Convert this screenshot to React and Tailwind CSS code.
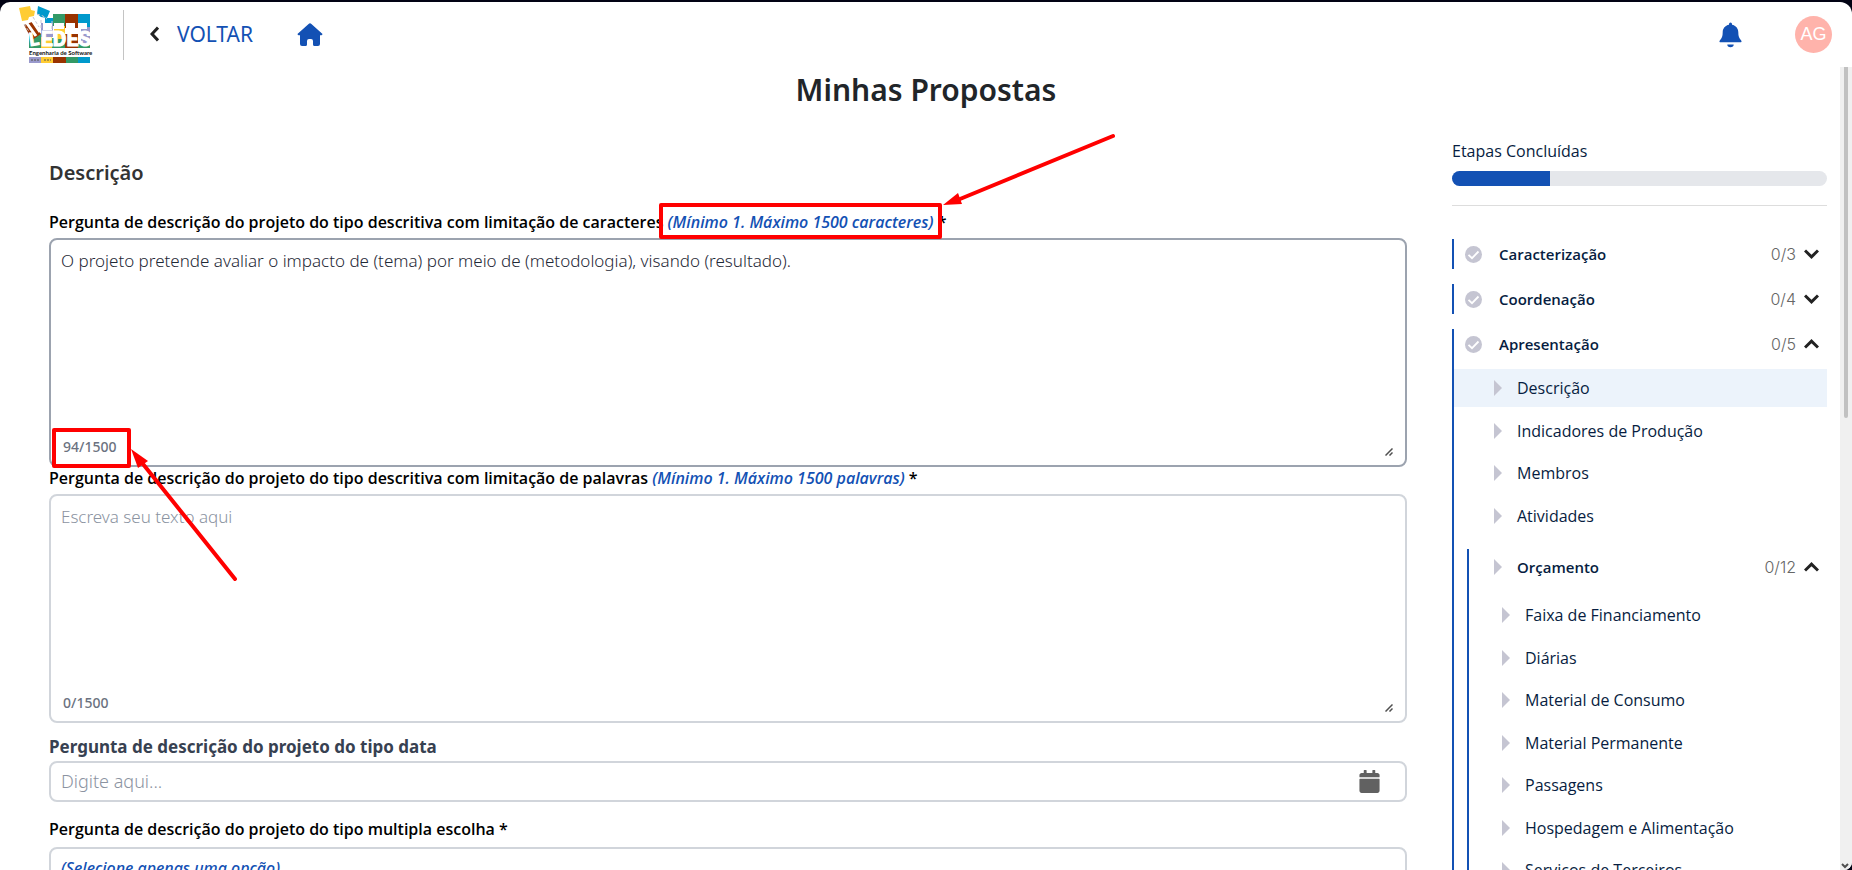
import { FaCalendar } from "react-icons/fa";

const sections = [
  { title: "Caracterização", count: "0/3" },
  { title: "Coordenação", count: "0/4" },
  { title: "Apresentação", count: "0/5", open: true },
];

const steps = ["Descrição", "Indicadores de Produção", "Membros", "Atividades"];

const budgetSteps = [
  "Faixa de Financiamento",
  "Diárias",
  "Material de Consumo",
  "Material Permanente",
  "Passagens",
  "Hospedagem e Alimentação",
  "Serviços de Terceiros",
];

function Logo() {
  return (
    <svg width="71" height="57" viewBox="0 0 71 57" className="overflow-visible" aria-label="LEDES">
      <path fill="#339966" d="M34 8h12v12H34zM10 28h12v14H10zM33 32h13v10H33zM58 38h13v4H58z" />
      <path fill="#993300" d="M46 8h16v14H46zM5 19l8 -3 9 12 -9 6zM46 28h13v14H46z" />
      <path fill="#0099cc" d="M59 8h12v13H59zM19 0l12 5 -3 7 -6 -1 -4 -3zM26 12h8v8H26z" />
      <path fill="#9999cc" d="M62 21h9v17h-9zM22 17h12v14H22z" />
      <path fill="#ffcc33" d="M0 2l11 -2 1 4 4 1 -1 5 -5 1 -1 3 -6 1zM22 31h11v11H22zM35 20h11v13H35z" />
      <path fill="#fff" d="M24 17h9v7h-9zM35 17h10v6H35zM47 17h9v6h-9zM59 17h9v6h-9z" />
      <path fill="none" stroke="#fff" strokeWidth="3" d="M7 16l10 14M13 14l8 12M18 10l4 6" />
      <path
        fill="none"
        stroke="#c5c5d2"
        strokeWidth="1"
        strokeDasharray="3 2"
        d="M5 18l8 12M14 11l6 10M18 8l6 2 4 3M22 14v8M33 15v8"
      />
      <g fill="#fff" stroke="#fff" strokeWidth="1" fontFamily="'Roboto', sans-serif" fontWeight="700">
        <text x="11" y="40" fontSize="18" transform="rotate(-8 11 40)">
          L
        </text>
        <text x="22" y="40" fontSize="21">
          EDES
        </text>
      </g>
      <path fill="#fff" d="M10 42h61v9H10z" />
      <text x="10" y="49" fontSize="6" fontWeight="700" fill="#111" fontFamily="'Lato', sans-serif">
        Engenharia de Software
      </text>
      <path fill="#9999cc" d="M10 51h12v6H10z" />
      <path fill="#ffcc33" d="M22 51h12v6H22z" />
      <path fill="#993300" d="M34 51h13v6H34z" />
      <path fill="#339966" d="M47 51h12v6H47z" />
      <path fill="#0099cc" d="M59 51h12v6H59z" />
      <path stroke="#554" strokeWidth="1" strokeDasharray="2 1" d="M12 54h8M25 54h7" />
    </svg>
  );
}

function HomeIcon() {
  return (
    <svg width="26" height="24" viewBox="0 0 26 24" fill="#1351b4">
      <path d="M11.6 1a2 2 0 0 1 2.8 0L25 10.400a1 1 0 0 1-.7 1.800H23V21a2 2 0 0 1-2 2h-3.500a1.500 1.500 0 0 1-1.500-1.500V18a2 2 0 0 0-2-2h-2a2 2 0 0 0-2 2v3.500A1.500 1.500 0 0 1 8.500 23H5a2 2 0 0 1-2-2v-8.800H1.700A1 1 0 0 1 1 10.400z" />
    </svg>
  );
}

function BellIcon() {
  return (
    <svg width="23" height="26" viewBox="0 0 23 26" fill="#1351b4">
      <path d="M11.500 0.500a1.500 1.500 0 0 1 1.500 1.500v.8c3.800.7 6.300 3.700 6.300 7.500 0 4.200.8 6 2.900 8.100.8.9.3 1.900-.9 1.900H1.700c-1.200 0-1.700-1-.9-1.900 2.100-2.100 2.900-3.900 2.900-8.100 0-3.800 2.500-6.800 6.300-7.500V2a1.500 1.500 0 0 1 1.500-1.500z" />
      <path d="M8.300 22.500h6.400a3.200 2.800 0 0 1-6.400 0z" />
    </svg>
  );
}

function Chevron({ open }) {
  return (
    <svg width="15" height="10" viewBox="0 0 15 10" fill="none" stroke="#222" strokeWidth="3">
      <path d={open ? "M1 8.500L7.500 2.200L14 8.500" : "M1 1.500L7.500 7.800L14 1.500"} />
    </svg>
  );
}

function CheckIcon() {
  return (
    <svg width="17" height="17" viewBox="0 0 17 17">
      <circle cx="8.500" cy="8.500" r="8.500" fill="#c5c5d2" />
      <path d="M3.500 8.800L7 12.200L13.500 5.500" fill="none" stroke="#fff" strokeWidth="1.800" />
    </svg>
  );
}

function Triangle() {
  return (
    <svg width="8" height="16" viewBox="0 0 8 16" fill="#c5c5d2">
      <path d="M0 0L8 8L0 16z" />
    </svg>
  );
}

function LongAnswer({ id, label, hint, counter, value, placeholder, active }) {
  return (
    <div>
      <label
        htmlFor={id}
        className="block h-[27px] font-['Open_Sans',sans-serif] text-[16px] leading-[22px] font-semibold text-black"
      >
        {label} <span className="text-[#1351b4] italic">{hint}</span> *
      </label>
      <div
        className={`relative h-[229px] rounded-lg border-2 px-[10px] pt-[9px] pb-[10px] ${
          active ? "border-[#9ca3af]" : "border-[#d1d5db]"
        }`}
      >
        <textarea
          id={id}
          defaultValue={value}
          placeholder={placeholder}
          className="block h-full w-full resize-none bg-transparent text-[17px] leading-[24px] font-light text-[#1f2937] outline-none placeholder:text-[#8b93a1]"
        />
        <span className="absolute bottom-2 left-3 text-[14px] leading-[20px] font-medium text-[#6b7280]">
          {counter}
        </span>
        <svg
          width="8"
          height="8"
          viewBox="0 0 8 8"
          stroke="#505050"
          strokeWidth="1.500"
          className="absolute right-3 bottom-[9px]"
        >
          <path d="M0.500 7.500L7.500 0.500M4.500 7.500L7.500 4.500" />
        </svg>
      </div>
    </div>
  );
}

function StepLink({ children, active }) {
  return (
    <a
      href="#"
      className={`flex h-[38px] items-center gap-[15px] pl-10 ${active ? "bg-[#ecf3fb]" : ""}`}
    >
      <Triangle />
      {children}
    </a>
  );
}

function Count({ children }) {
  return (
    <span className="mr-2 ml-auto font-['Inter',sans-serif] font-light text-[#666]">{children}</span>
  );
}

// Red boxes and arrows drawn over the form
function Annotations() {
  return (
    <svg
      className="pointer-events-none absolute top-0 left-0"
      width="1200"
      height="600"
      fill="none"
      stroke="#ff0000"
      strokeWidth="4"
      strokeLinecap="round"
      strokeLinejoin="round"
    >
      <rect x="661" y="205" width="279" height="32" />
      <path d="M1113 136L960 199" />
      <path d="M943 205L958 193L962 204z" fill="#ff0000" stroke="none" />
      <rect x="54" y="430" width="75" height="36" />
      <path d="M235 579L143 464" />
      <path d="M131 449L148 461L138 468z" fill="#ff0000" stroke="none" />
    </svg>
  );
}

export default function App() {
  return (
    <div className="h-screen overflow-hidden bg-[#020314] pt-[2px] font-['Noto_Sans',sans-serif]">
      <div className="relative flex h-full flex-col overflow-hidden rounded-tl-[10px] rounded-tr-[12px] rounded-br-lg bg-white">
        <header className="flex h-[65px] shrink-0 items-center pr-5 pl-[19px]">
          <Logo />
          <div className="ml-[33px] h-[50px] w-px bg-[#c4c4c4]" />
          <button className="ml-[26px] flex items-center gap-[18px] pb-[2px] text-[21px] leading-[30px] text-[#1351b4]">
            <svg width="9" height="16" viewBox="0 0 9 16" fill="none" stroke="#222" strokeWidth="3">
              <path d="M8 1.500L2 8L8 14.500" />
            </svg>
            VOLTAR
          </button>
          <a href="#" aria-label="Início" className="ml-[44px]">
            <HomeIcon />
          </a>
          <button aria-label="Notificações" className="ml-auto">
            <BellIcon />
          </button>
          <div className="ml-[53px] flex size-[37px] items-center justify-center rounded-full bg-[#ffb3ab] font-['Liberation_Sans',sans-serif] text-[18px] text-white">
            AG
          </div>
        </header>

        <main className="min-h-0 flex-1 overflow-hidden">
          <h1 className="pt-[3px] text-center text-[30px] leading-[40px] font-semibold text-[#212529]">
            Minhas Propostas
          </h1>

          <div className="flex gap-[45px] pr-[25px] pl-[49px]">
            <form className="min-w-0 flex-1 pt-[49px]">
              <h2 className="mb-6 text-[20px] leading-[28px] font-semibold text-[#333]">Descrição</h2>

              <LongAnswer
                id="caracteres"
                label="Pergunta de descrição do projeto do tipo descritiva com limitação de caracteres"
                hint="(Mínimo 1. Máximo 1500 caracteres)"
                counter="94/1500"
                value="O projeto pretende avaliar o impacto de (tema) por meio de (metodologia), visando (resultado)."
                active
              />
              <LongAnswer
                id="palavras"
                label="Pergunta de descrição do projeto do tipo descritiva com limitação de palavras"
                hint="(Mínimo 1. Máximo 1500 palavras)"
                counter="0/1500"
                placeholder="Escreva seu texto aqui"
              />

              <label
                htmlFor="data"
                className="mt-[11px] mb-px block text-[17px] leading-[26px] font-bold text-[#374151]"
              >
                Pergunta de descrição do projeto do tipo data
              </label>
              <div className="flex h-[41px] items-center rounded-lg border-2 border-[#d1d5db] pr-6 pl-[10px]">
                <input
                  id="data"
                  placeholder="Digite aqui..."
                  className="min-w-0 flex-1 text-[18px] font-light outline-none placeholder:text-[#8b93a1]"
                />
                <FaCalendar size={23} color="#616161" />
              </div>

              <h3 className="mt-4 mb-[7px] font-['Open_Sans',sans-serif] text-[16px] leading-[22px] font-semibold text-black">
                Pergunta de descrição do projeto do tipo multipla escolha *
              </h3>
              <div className="h-[120px] rounded-lg border-2 border-[#d1d5db] px-[10px] pt-2 text-[16px] leading-[22px] font-medium text-[#1351b4] italic">
                (Selecione apenas uma opção)
              </div>
            </form>

            <aside className="w-[375px] shrink-0 pt-[29px] font-['Open_Sans',sans-serif] text-[16px] leading-[24px] text-[#071d41]">
              <h2 className="font-medium">Etapas Concluídas</h2>
              <div className="mt-2 h-[15px] overflow-hidden rounded-full bg-[#e5e7eb]">
                <div className="h-full w-[26%] bg-[#1351b4]" />
              </div>
              <hr className="mt-[19px] mb-[33px] border-[#dddddd]" />

              <nav className="flex flex-col gap-[15px]">
                {sections.map((s) => (
                  <section key={s.title} className="border-l-2 border-[#1351b4]">
                    <button className="flex h-[30px] w-full items-center pr-2 pl-[11px]">
                      <CheckIcon />
                      <span className="ml-[17px] text-[15px] font-semibold">{s.title}</span>
                      <Count>{s.count}</Count>
                      <Chevron open={s.open} />
                    </button>

                    {s.open && (
                      <>
                        <ul className="mt-[10px] grid h-[170px] auto-rows-fr">
                          {steps.map((step) => (
                            <li key={step}>
                              <StepLink active={step === "Descrição"}>{step}</StepLink>
                            </li>
                          ))}
                        </ul>
                        <section className="mt-[10px] ml-[13px] border-l-2 border-[#1351b4]">
                          <button className="flex h-[36px] w-full items-center pr-2 pl-[25px]">
                            <Triangle />
                            <span className="ml-[15px] text-[15px] font-semibold">Orçamento</span>
                            <Count>0/12</Count>
                            <Chevron open />
                          </button>
                          <ul className="mt-[11px] -ml-[7px] grid h-[298px] auto-rows-fr">
                            {budgetSteps.map((step) => (
                              <li key={step}>
                                <StepLink>{step}</StepLink>
                              </li>
                            ))}
                          </ul>
                        </section>
                      </>
                    )}
                  </section>
                ))}
              </nav>
            </aside>
          </div>
        </main>

        {/* Scrollbar */}
        <div className="absolute top-[65px] right-0 bottom-0 flex w-3 flex-col items-center justify-between bg-[#f0f0f0]">
          <div className="h-[351px] w-1 rounded-b-full bg-[#c1c1c1]" />
          <svg
            width="8"
            height="7"
            viewBox="0 0 8 7"
            fill="none"
            stroke="#505050"
            strokeWidth="2"
            className="mr-[2px]"
          >
            <path d="M1 1L4 4L7 1" />
          </svg>
        </div>
      </div>
      <Annotations />
    </div>
  );
}
